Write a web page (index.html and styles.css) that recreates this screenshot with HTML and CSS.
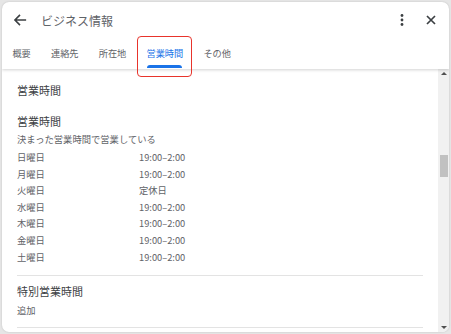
FILE: index.html
```html
<!DOCTYPE html>
<html lang="ja">
<head>
  <meta charset="UTF-8">
  <title>ビジネス情報</title>
  <link rel="stylesheet" href="styles.css">
</head>
<body>
  <div class="dialog">
    <header class="dialog-head">
      <div class="title-bar">
        <span class="icon-btn back">
          <svg width="14" height="14" viewBox="0 0 16 16"><path d="M15 8H2.5M8 2.2L2.2 8 8 13.8" fill="none" stroke="#3c4043" stroke-width="1.8"/></svg>
        </span>
        <h1 class="title">ビジネス情報</h1>
        <span class="icon-btn more">
          <svg width="4" height="12" viewBox="0 0 4 12"><circle cx="2" cy="1.5" r="1.4" fill="#3c4043"/><circle cx="2" cy="6" r="1.4" fill="#3c4043"/><circle cx="2" cy="10.5" r="1.4" fill="#3c4043"/></svg>
        </span>
        <span class="icon-btn close">
          <svg width="10" height="10" viewBox="0 0 10 10"><path d="M1 1L9 9M9 1L1 9" stroke="#3c4043" stroke-width="1.7"/></svg>
        </span>
      </div>
      <nav class="tabs">
        <span class="tab">概要</span>
        <span class="tab">連絡先</span>
        <span class="tab">所在地</span>
        <span class="tab active">営業時間<i class="mark"></i></span>
        <span class="tab">その他</span>
      </nav>
    </header>

    <div class="body-wrap">
      <main class="content">
        <h2 class="section-title">営業時間</h2>
        <h3 class="sub-title">営業時間</h3>
        <p class="note">決まった営業時間で営業している</p>
        <ul class="hours">
          <li><span>日曜日</span><span>19:00–2:00</span></li>
          <li><span>月曜日</span><span>19:00–2:00</span></li>
          <li><span>火曜日</span><span>定休日</span></li>
          <li><span>水曜日</span><span>19:00–2:00</span></li>
          <li><span>木曜日</span><span>19:00–2:00</span></li>
          <li><span>金曜日</span><span>19:00–2:00</span></li>
          <li><span>土曜日</span><span>19:00–2:00</span></li>
        </ul>
        <hr class="divider">
        <h3 class="sub-title special">特別営業時間</h3>
        <p class="note">追加</p>
        <hr class="divider last">
      </main>
      <div class="scrollbar">
        <span class="arrow up"></span>
        <span class="thumb"></span>
        <span class="arrow down"></span>
      </div>
    </div>
  </div>
</body>
</html>
```

FILE: styles.css
```css
* {
  margin: 0;
  padding: 0;
  box-sizing: border-box;
}

body {
  background: #e6e6e6;
  padding: 2px;
  font-family: "Noto Sans CJK JP", "Noto Sans", sans-serif;
  color: #3c4043;
}

.dialog {
  width: 447px;
  height: 330px;
  background: #fff;
  border-radius: 7px;
  box-shadow: 0 0 2px rgba(0,0,0,.18);
  overflow: hidden;
  display: flex;
  flex-direction: column;
}

.dialog-head {
  position: relative;
  z-index: 1;
  box-shadow: 0 1px 3px rgba(0,0,0,.18);
}

.title-bar {
  height: 36px;
  display: flex;
  align-items: center;
}

.icon-btn {
  display: flex;
  align-items: center;
  justify-content: center;
}

.back {
  width: 36px;
}

.title {
  flex: 1;
  margin-left: 3px;
  font-size: 12px;
  font-weight: 400;
  color: #5f6368;
}

.more {
  width: 20px;
  margin-right: 9px;
}

.close {
  width: 20px;
  margin-right: 8px;
}

.tabs {
  height: 31px;
  padding-left: 0.3px;
  display: flex;
  align-items: stretch;
}

.tab {
  position: relative;
  padding: 0 10.1px;
  font-size: 9.2px;
  line-height: 30px;
  color: #5f6368;
}

.tab.active {
  color: #1a73e8;
}

.tab .mark {
  position: absolute;
  left: 11px;
  right: 11px;
  bottom: 1px;
  height: 3px;
  border-radius: 3px 3px 0 0;
  background: #1a73e8;
}

/* red annotation box */
.tab.active::after {
  content: "";
  position: absolute;
  left: 1px;
  right: 1px;
  top: -2px;
  bottom: -8px;
  border: 1.5px solid #e8342c;
  border-radius: 4px;
}

.body-wrap {
  flex: 1;
  display: flex;
  min-height: 0;
}

.content {
  flex: 1;
  padding: 13px 15px 0 15px;
  overflow: hidden;
}

.section-title {
  font-size: 11px;
  font-weight: 400;
  line-height: 17px;
  color: #3c4043;
}

.sub-title {
  margin-top: 14px;
  font-size: 11px;
  font-weight: 400;
  line-height: 17px;
  color: #3c4043;
}

.note {
  margin-top: 1px;
  font-size: 9.3px;
  line-height: 16.6px;
  color: #5f6368;
}

.hours {
  list-style: none;
  margin-top: 1.5px;
}

.hours li {
  display: grid;
  grid-template-columns: 122px auto;
  font-size: 9.3px;
  line-height: 16.6px;
  color: #5f6368;
}

.divider {
  border: 0;
  border-top: 1px solid #e3e3e3;
  margin-top: 9.5px;
}

.sub-title.special {
  margin-top: 7.5px;
}

.special + .note {
  margin-top: 2px;
}

.divider.last {
  margin-top: 8.5px;
}

.scrollbar {
  width: 11px;
  background: #f1f1f1;
  display: flex;
  flex-direction: column;
  align-items: center;
}

.arrow {
  width: 0;
  height: 0;
  border-left: 3px solid transparent;
  border-right: 3px solid transparent;
}

.arrow.up {
  margin-top: 3px;
  border-bottom: 3px solid #505050;
}

.arrow.down {
  margin-top: auto;
  margin-bottom: 3px;
  border-top: 3px solid #505050;
}

.thumb {
  width: 8px;
  height: 22px;
  margin-top: 80px;
  background: #c1c1c1;
}
```
